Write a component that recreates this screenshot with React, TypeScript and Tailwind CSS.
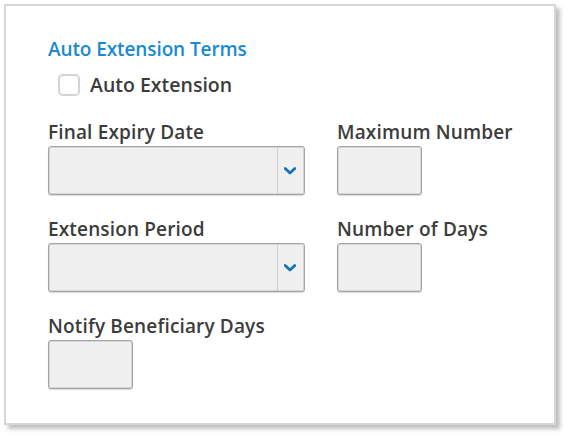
const font = { fontFamily: '"Open Sans", "Noto Sans", sans-serif' }

function Label({ children }: { children: string }) {
  return (
    <div className="h-6 text-[19px] font-semibold leading-5 tracking-[0.15px] text-[#3c3c3c] whitespace-nowrap">
      {children}
    </div>
  )
}

function Chevron() {
  return (
    <svg width="12" height="8" viewBox="0 0 12 8" fill="none">
      <path d="M1.2 1.5 6 6 10.8 1.5" stroke="#1474b4" strokeWidth="2.8" strokeLinecap="round" strokeLinejoin="round" />
    </svg>
  )
}

function SelectBox() {
  return (
    <div className="flex h-[49px] w-[257px] rounded-[3px] border border-[#a5a5a5] bg-[#f0f0f0] shadow-[inset_0_0_0_1px_#d6d6d6,0_1px_1px_rgba(0,0,0,0.15)]">
      <div className="flex-1" />
      <div className="flex w-[27px] items-center justify-center border-l border-[#cfcfcf] pr-[2px]">
        <Chevron />
      </div>
    </div>
  )
}

function SmallBox() {
  return (
    <div className="h-[49px] w-[85px] rounded-[3px] border border-[#a5a5a5] bg-[#f0f0f0] shadow-[inset_0_0_0_1px_#d6d6d6,0_1px_1px_rgba(0,0,0,0.15)]" />
  )
}

export default function App() {
  return (
    <div className="h-[438px] w-[569px] bg-white p-1" style={font}>
      <div className="h-[421px] w-[552px] border-2 border-[#d6d6d6] bg-white pl-[42px] pt-[31px] shadow-[4px_4px_4px_rgba(0,0,0,0.25)]">
        <h2 className="h-6 text-[19px] font-semibold leading-6 tracking-[-0.1px] text-[#1a8ad0] whitespace-nowrap">
          Auto Extension Terms
        </h2>
        <label className="mt-3 flex items-center gap-[10px] pl-[10px]">
          <span className="h-[22px] w-[22px] rounded-[5px] border-2 border-[#d4d4d4] bg-white" />
          <span className="text-[19.5px] font-semibold leading-6 text-[#3c3c3c] whitespace-nowrap">
            Auto Extension
          </span>
        </label>
        <div className="mt-[25px] grid grid-cols-[257px_85px] gap-x-8 gap-y-6">
          <div>
            <Label>Final Expiry Date</Label>
            <SelectBox />
          </div>
          <div>
            <Label>Maximum Number</Label>
            <SmallBox />
          </div>
          <div>
            <Label>Extension Period</Label>
            <SelectBox />
          </div>
          <div>
            <Label>Number of Days</Label>
            <SmallBox />
          </div>
          <div>
            <Label>Notify Beneficiary Days</Label>
            <SmallBox />
          </div>
        </div>
      </div>
    </div>
  )
}
